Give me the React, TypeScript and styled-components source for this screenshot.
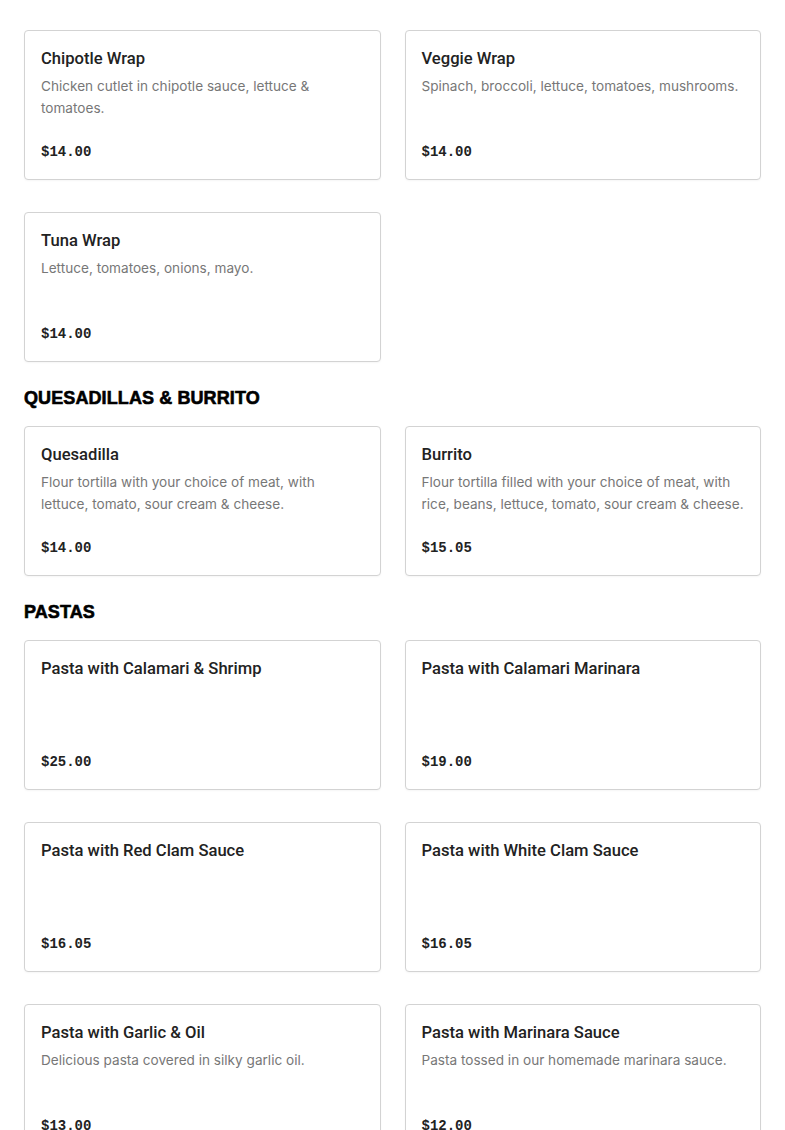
import styled, { createGlobalStyle } from "styled-components";

const GlobalStyle = createGlobalStyle`
  html, body {
    margin: 0;
    padding: 0;
    background: #fff;
  }
  * {
    box-sizing: border-box;
  }
`;

const Page = styled.main`
  padding: 30px 24px 0;
  font-family: Inter, "Liberation Sans", Arial, sans-serif;
  color: #222;
`;

const Section = styled.section`
  & + & {
    margin-top: 25px;
  }
`;

const SectionTitle = styled.h2`
  margin: 0 0 17px;
  font-family: "Liberation Sans", Arial, sans-serif;
  font-size: 18px;
  font-weight: 700;
  line-height: 22px;
  letter-spacing: 0.1px;
  color: #000;
  text-transform: uppercase;
  -webkit-text-stroke: 0.6px #000;
`;

const Grid = styled.div`
  display: grid;
  grid-template-columns: 1fr 1fr;
  column-gap: 24px;
  row-gap: 32px;
`;

const Card = styled.article`
  display: flex;
  flex-direction: column;
  height: 150px;
  padding: 16px;
  border: 1px solid #d3d3d3;
  border-radius: 4px;
  background: #fff;
  box-shadow: 0 1px 2px rgba(0, 0, 0, 0.04);
`;

const Name = styled.h3`
  margin: 0 0 4px;
  font-family: Roboto, "Liberation Sans", Arial, sans-serif;
  font-size: 16.6px;
  font-weight: 500;
  line-height: 24px;
  color: #222;
`;

const Description = styled.p`
  margin: 0;
  font-family: Inter, "Liberation Sans", Arial, sans-serif;
  font-size: 13.6px;
  line-height: 22px;
  color: #777;
`;

const Price = styled.span`
  margin-top: auto;
  font-family: "Liberation Mono", "DejaVu Sans Mono", monospace;
  font-size: 14px;
  font-weight: 700;
  line-height: 22px;
  color: #222;
`;

interface Item {
  name: string;
  description?: string;
  price: string;
}

interface MenuSection {
  title?: string;
  items: Item[];
}

const menu: MenuSection[] = [
  {
    items: [
      {
        name: "Chipotle Wrap",
        description: "Chicken cutlet in chipotle sauce, lettuce & tomatoes.",
        price: "$14.00",
      },
      {
        name: "Veggie Wrap",
        description: "Spinach, broccoli, lettuce, tomatoes, mushrooms.",
        price: "$14.00",
      },
      {
        name: "Tuna Wrap",
        description: "Lettuce, tomatoes, onions, mayo.",
        price: "$14.00",
      },
    ],
  },
  {
    title: "Quesadillas & Burrito",
    items: [
      {
        name: "Quesadilla",
        description:
          "Flour tortilla with your choice of meat, with lettuce, tomato, sour cream & cheese.",
        price: "$14.00",
      },
      {
        name: "Burrito",
        description:
          "Flour tortilla filled with your choice of meat, with rice, beans, lettuce, tomato, sour cream & cheese.",
        price: "$15.05",
      },
    ],
  },
  {
    title: "Pastas",
    items: [
      { name: "Pasta with Calamari & Shrimp", price: "$25.00" },
      { name: "Pasta with Calamari Marinara", price: "$19.00" },
      { name: "Pasta with Red Clam Sauce", price: "$16.05" },
      { name: "Pasta with White Clam Sauce", price: "$16.05" },
      {
        name: "Pasta with Garlic & Oil",
        description: "Delicious pasta covered in silky garlic oil.",
        price: "$13.00",
      },
      {
        name: "Pasta with Marinara Sauce",
        description: "Pasta tossed in our homemade marinara sauce.",
        price: "$12.00",
      },
    ],
  },
];

export default function App() {
  return (
    <>
      <GlobalStyle />
      <Page>
        {menu.map((section, i) => (
          <Section key={i}>
            {section.title && <SectionTitle>{section.title}</SectionTitle>}
            <Grid>
              {section.items.map((item) => (
                <Card key={item.name}>
                  <Name>{item.name}</Name>
                  {item.description && <Description>{item.description}</Description>}
                  <Price>{item.price}</Price>
                </Card>
              ))}
            </Grid>
          </Section>
        ))}
      </Page>
    </>
  );
}
